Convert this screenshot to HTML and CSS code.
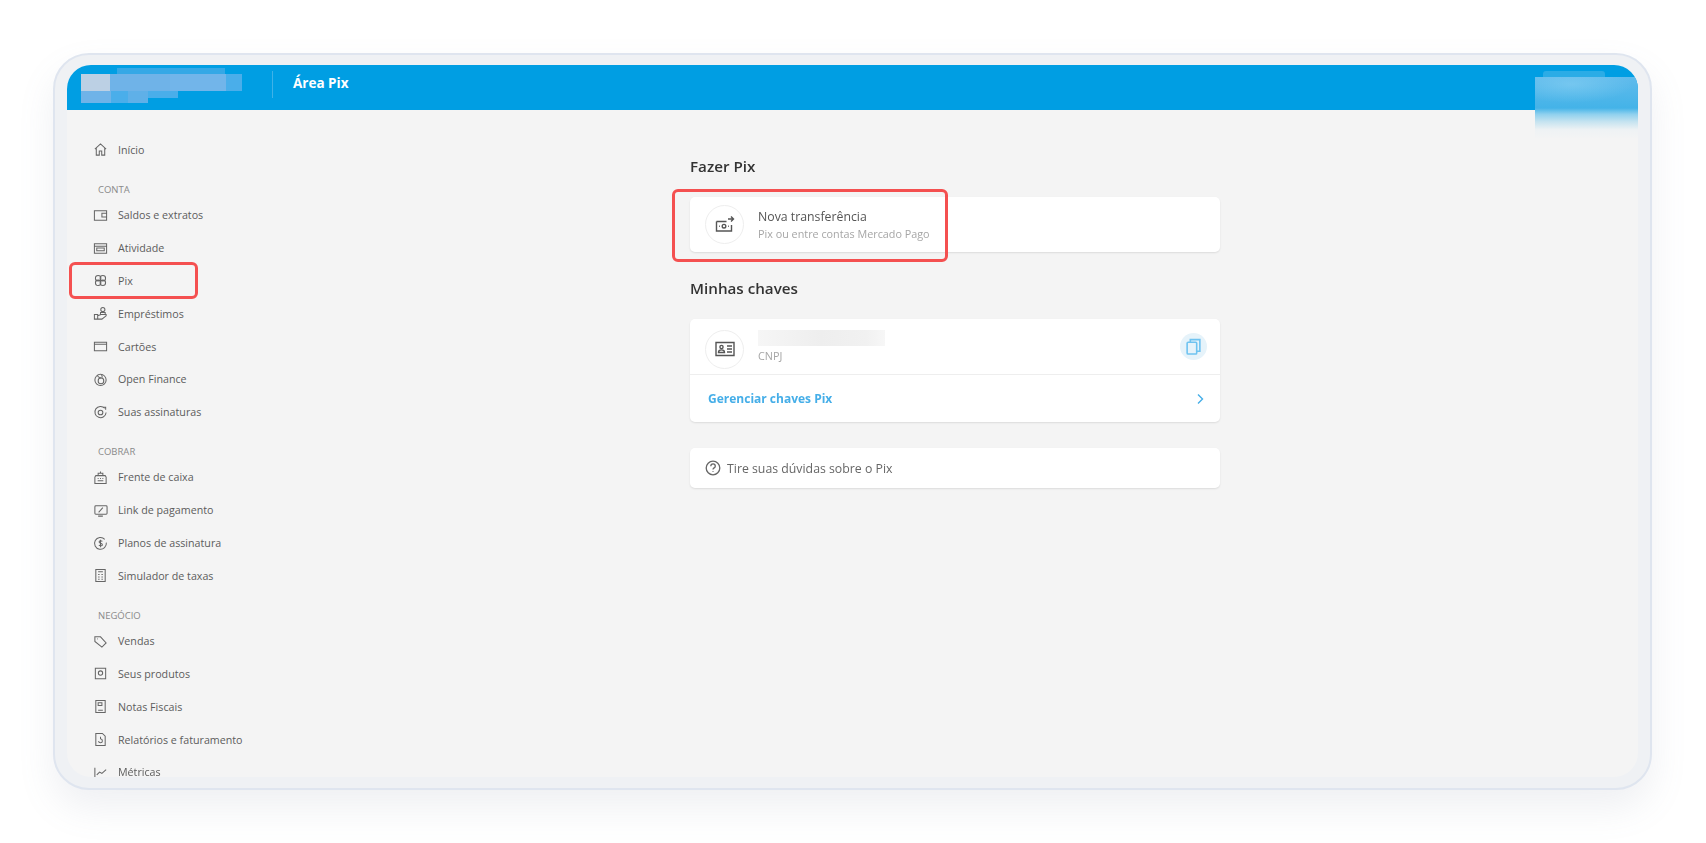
FILE: index.html
```html
<!DOCTYPE html>
<html lang="pt-BR">
<head>
<meta charset="utf-8">
<title>Área Pix</title>
<link rel="stylesheet" href="styles.css">
</head>
<body>
<div class="frame">
  <div class="shell">
    <header class="topbar">
      <svg class="logo-mosaic" width="162" height="36" viewBox="0 0 162 36">
        <rect x="1" y="7" width="29" height="17" fill="#bcd0e4"/>
        <rect x="30" y="7" width="60" height="17" fill="#6fb3e8"/>
        <rect x="37" y="1" width="108" height="6" fill="#35a8e6"/>
        <rect x="90" y="7" width="56" height="17" fill="#72b5ea"/>
        <rect x="146" y="7" width="16" height="17" fill="#4aaeea"/>
        <rect x="1" y="24" width="30" height="12" fill="#6fb3e8"/>
        <rect x="31" y="24" width="17" height="12" fill="#4aaeea"/>
        <rect x="48" y="24" width="20" height="12" fill="#5fb0e8"/>
        <rect x="68" y="24" width="30" height="7" fill="#4aaeea"/>
      </svg>
      <span class="topbar-divider"></span>
      <h1 class="topbar-title">Área Pix</h1>
      <div class="user-blur"></div>
    </header>
    <div class="content">
      <nav class="sidebar">
        <a class="nav-item nav-first">
          <svg class="nav-icon" viewBox="0 0 16 16"><path d="M2 7.500 8 2l6 5.500M3.500 6.500V14h3.200V9.500h2.600V14h3.200V6.500"/></svg>
          <span>Início</span>
        </a>
        <div class="nav-group">CONTA</div>
        <a class="nav-item">
          <svg class="nav-icon" viewBox="0 0 16 16"><path d="M1.500 3h13v10h-13zM9.500 5.500h5v4h-5z"/></svg>
          <span>Saldos e extratos</span>
        </a>
        <a class="nav-item">
          <svg class="nav-icon" viewBox="0 0 16 16"><path d="M1.500 3h13v10h-13zM1.500 5.500h13M4 7.500h8v2.800H4z"/></svg>
          <span>Atividade</span>
        </a>
        <a class="nav-item">
          <svg class="nav-icon" viewBox="0 0 16 16"><circle cx="5.500" cy="5.500" r="2.900"/><circle cx="10.500" cy="5.500" r="2.900"/><circle cx="5.500" cy="10.500" r="2.900"/><circle cx="10.500" cy="10.500" r="2.900"/></svg>
          <span>Pix</span>
        </a>
        <a class="nav-item">
          <svg class="nav-icon" viewBox="0 0 16 16"><circle cx="10.500" cy="3.800" r="2.200"/><path d="M1.500 9h3.500v5H1.500zM5 10.500 8.500 9H14v1.500L9.500 14H5M8 9V7h5v2"/></svg>
          <span>Empréstimos</span>
        </a>
        <a class="nav-item">
          <svg class="nav-icon" viewBox="0 0 16 16"><path d="M1.500 3.500h13v9h-13zM1.500 5.500h13"/></svg>
          <span>Cartões</span>
        </a>
        <a class="nav-item">
          <svg class="nav-icon" viewBox="0 0 16 16"><circle cx="8" cy="8.500" r="6"/><circle cx="8.500" cy="9.500" r="3"/><path d="M5 3c-.5 2 2 3 3.500 3.500M9 2.500c1 1.500 1 3 .5 4"/></svg>
          <span>Open Finance</span>
        </a>
        <a class="nav-item">
          <svg class="nav-icon" viewBox="0 0 16 16"><path d="M12.500 3.500A6 6 0 1 0 14 8"/><circle cx="8" cy="8" r="2.500"/><path d="M11 2.500h2.500V5"/></svg>
          <span>Suas assinaturas</span>
        </a>
        <div class="nav-group nav-group-spaced">COBRAR</div>
        <a class="nav-item">
          <svg class="nav-icon" viewBox="0 0 16 16"><path d="M2 14.500V7.500l1-1.500h10l1 1.500v7zM5.500 6V3.500h5V6M8 3.500V1.500M5 9h1M7.500 9h1M10 9h1M5 11.500h6"/></svg>
          <span>Frente de caixa</span>
        </a>
        <a class="nav-item">
          <svg class="nav-icon" viewBox="0 0 16 16"><path d="M3 3h11a1 1 0 0 1 1 1v7a1 1 0 0 1-1 1H3a1 1 0 0 1-1-1V4a1 1 0 0 1 1-1zM6 10l4.500-5M5.500 14h5"/></svg>
          <span>Link de pagamento</span>
        </a>
        <a class="nav-item">
          <svg class="nav-icon" viewBox="0 0 16 16"><path d="M12.500 3.500a6.300 6.300 0 1 0 1.700 3.500M10 5.800c-1-1-3.500-1-3.500.6 0 1.800 3.500 1 3.500 2.800 0 1.500-2.500 1.500-3.800.6M8 4v8"/></svg>
          <span>Planos de assinatura</span>
        </a>
        <a class="nav-item">
          <svg class="nav-icon" viewBox="0 0 16 16"><path d="M3 1.500h10v13H3zM5.500 4h5M5.500 7h1.500M9 7h1.500M5.500 9.500h1.500M9 9.500h1.500M5.500 12h1.500M9 12h1.500"/></svg>
          <span>Simulador de taxas</span>
        </a>
        <div class="nav-group nav-group-spaced">NEGÓCIO</div>
        <a class="nav-item">
          <svg class="nav-icon" viewBox="0 0 16 16"><path d="M2 3h6l6 6.500-4.500 4.500L2 8zM4.500 5.200h.6"/></svg>
          <span>Vendas</span>
        </a>
        <a class="nav-item">
          <svg class="nav-icon" viewBox="0 0 16 16"><path d="M2.500 2.500h11v11h-11z"/><circle cx="8" cy="7.500" r="2.300"/></svg>
          <span>Seus produtos</span>
        </a>
        <a class="nav-item">
          <svg class="nav-icon" viewBox="0 0 16 16"><path d="M3 1.500h10v13H3zM5.500 4h4v3h-4zM5.500 12h5"/></svg>
          <span>Notas Fiscais</span>
        </a>
        <a class="nav-item">
          <svg class="nav-icon" viewBox="0 0 16 16"><path d="M3 1.500h7l3 3v10H3zM6 9.500a2 2 0 1 0 2-2M8 5v2.500"/></svg>
          <span>Relatórios e faturamento</span>
        </a>
        <a class="nav-item">
          <svg class="nav-icon" viewBox="0 0 16 16"><path d="M2 3v10.500h12.500M4 10.500l3-3 2.500 1.500L14 5"/></svg>
          <span>Métricas</span>
        </a>
      </nav>
      <main class="main">
        <h2 class="section-title">Fazer Pix</h2>
        <section class="card card-row card-transfer">
          <span class="round-icon">
            <svg class="round-svg" viewBox="0 0 20 20"><path d="M1.500 6.500h10M1.500 6.500v9.500h15v-6"/><circle cx="9" cy="11.200" r="1.800"/><path d="M4 11.200h.8M13 11.200h.8M13 4h5.500M16 1.500 18.500 4 16 6.500"/></svg>
          </span>
          <div class="card-text">
            <div class="card-title">Nova transferência</div>
            <div class="card-sub">Pix ou entre contas Mercado Pago</div>
          </div>
        </section>
        <h2 class="section-title section-title-keys">Minhas chaves</h2>
        <section class="card">
          <div class="card-row card-key">
            <span class="round-icon">
              <svg class="round-svg" viewBox="0 0 20 20"><path d="M1 3.500h18v13H1z"/><circle cx="6.500" cy="8" r="1.600"/><path d="M3.500 13.500c0-3.500 6-3.500 6 0zM12 7h5M12 10h5M12 13h5"/></svg>
            </span>
            <div class="card-text">
              <div class="key-blur"></div>
              <div class="card-sub key-sub">CNPJ</div>
            </div>
            <span class="copy-btn">
              <svg class="copy-svg" viewBox="0 0 16 16"><rect x="2" y="4" width="9" height="11" rx="1"/><path d="M5 4V1.500h9v11h-3"/></svg>
            </span>
          </div>
          <a class="card-link">
            <span>Gerenciar chaves Pix</span>
            <svg class="chevron" viewBox="0 0 8 12"><path d="M2 1.500 6.500 6 2 10.500"/></svg>
          </a>
        </section>
        <section class="card help-card">
          <svg class="help-icon" viewBox="0 0 16 16"><circle cx="8" cy="8" r="6.800"/><path d="M5.800 6.200c0-3 4.500-3 4.500 0 0 1.800-2.300 1.600-2.300 3.300M8 11.200v.8"/></svg>
          <span>Tire suas dúvidas sobre o Pix</span>
        </section>
      </main>
    </div>
    <div class="mark mark-pix"></div>
    <div class="mark mark-transfer"></div>
  </div>
</div>
</body>
</html>
```

FILE: styles.css
```css
* { box-sizing: border-box; }
html, body { margin: 0; height: 100%; background: #fff; overflow: hidden; }
body {
  padding: 53px 54px 0 53px;
  font-family: "Open Sans", "Liberation Sans", sans-serif;
  color: #555;
}
.frame {
  height: 737px;
  padding: 10px 12px 11px 12px;
  background: #eff1f4;
  border: 2px solid #dfe5ef;
  border-radius: 36px;
  box-shadow: 0 18px 36px rgba(120, 135, 160, .12);
}
.shell {
  position: relative;
  height: 100%;
  display: flex;
  flex-direction: column;
  background: #f4f4f4;
  border-radius: 24px;
  overflow: hidden;
  filter: blur(.35px);
}
.topbar {
  flex: none;
  height: 45px;
  padding-bottom: 7px;
  display: flex;
  align-items: center;
  background: #009ee3;
  color: #fff;
  position: relative;
}
.logo-mosaic { flex: none; margin: 2px 0 0 13px; filter: blur(.6px); }
.topbar-divider { flex: none; width: 1px; height: 27px; margin-left: 30px; background: #3fb2e8; }
.topbar-title { margin: 0 0 0 20px; font-size: 13.500px; font-weight: 700; line-height: 1; }
.user-blur {
  position: absolute;
  right: 0;
  top: 12px;
  width: 103px;
  height: 62px;
  background:
    radial-gradient(ellipse 60% 30% at 35% 12%, rgba(150, 215, 245, .45), rgba(150, 215, 245, 0)),
    linear-gradient(to bottom, #60bbec 0%, #44b3e8 50%, #8fd0ee 60%, #c5e3f0 72%, #eef2f4 85%, #f4f4f4 100%);
}
.user-blur::before {
  content: "";
  position: absolute;
  left: 8px;
  top: -6px;
  width: 62px;
  height: 6px;
  border-radius: 3px 3px 0 0;
  background: #2bace6;
}
.content { flex: 1; min-height: 0; display: flex; }
.sidebar { flex: none; width: 205px; padding-top: 23.600px; overflow: hidden; }
.nav-item {
  display: flex;
  align-items: center;
  height: 32.800px;
  padding-left: 26px;
  font-size: 10.700px;
  color: #5c5c5c;
  white-space: nowrap;
}
.nav-first { margin-bottom: 14.600px; }
.nav-icon {
  flex: none;
  width: 15px;
  height: 15px;
  margin-right: 10px;
  fill: none;
  stroke: #666;
  stroke-width: 1.100;
}
.nav-group {
  height: 18px;
  line-height: 18px;
  padding-left: 31px;
  font-size: 9.500px;
  color: #8a8a8a;
}
.nav-group-spaced { margin-top: 14.500px; }
.main { flex: 1; min-width: 0; display: flex; flex-direction: column; align-items: center; padding-top: 47px; }
.main > * { width: 530px; flex: none; }
.section-title { margin: 0; height: 20px; line-height: 18px; font-size: 15.200px; font-weight: 600; color: #333; }
.section-title-keys { margin-top: 27px; }
.card {
  margin-top: 20px;
  background: #fff;
  border-radius: 5px;
  box-shadow: 0 1px 2px rgba(0, 0, 0, .1);
}
.card-row { display: flex; align-items: center; }
.card-transfer { height: 55px; padding-left: 15px; }
.card-key { height: 56px; padding: 0 13px 0 15px; border-bottom: 1px solid #eee; }
.card-key .round-icon { margin-top: 5px; }
.round-icon {
  flex: none;
  width: 39px;
  height: 39px;
  display: flex;
  align-items: center;
  justify-content: center;
  border: 1px solid #eee;
  border-radius: 50%;
}
.round-svg { width: 20px; height: 20px; fill: none; stroke: #555; stroke-width: 1.400; }
.card-text { flex: 1; margin-left: 14px; }
.card-title { font-size: 12.300px; line-height: 18px; color: #555; }
.card-sub { font-size: 10.800px; line-height: 15px; color: #a6a6a6; }
.key-sub { margin-top: 2px; }
.key-blur { width: 127px; height: 16px; background: linear-gradient(90deg, #f6f6f6, #eeeeee 50%, #f1f1f1 85%, #f7f7f7); }
.copy-btn {
  flex: none;
  width: 27px;
  height: 27px;
  display: flex;
  align-items: center;
  justify-content: center;
  border-radius: 50%;
  background: #e6f3fa;
}
.copy-svg { width: 17px; height: 17px; fill: none; stroke: #6fc3f0; stroke-width: 1.500; }
.card-link {
  height: 47px;
  display: flex;
  align-items: center;
  justify-content: space-between;
  padding: 0 16px 0 18px;
  font-size: 12px;
  font-weight: 700;
  color: #45aee8;
}
.chevron { width: 8px; height: 12px; fill: none; stroke: #45aee8; stroke-width: 1.400; }
.help-card {
  margin-top: 26px;
  height: 40px;
  display: flex;
  align-items: center;
  padding-left: 15px;
  font-size: 12.300px;
  color: #666;
}
.help-icon { width: 16px; height: 16px; margin-right: 6px; fill: none; stroke: #666; stroke-width: 1.300; }
.mark { position: absolute; border: 3px solid #f45050; border-radius: 6px; pointer-events: none; }
.mark-pix { left: 2px; top: 197px; width: 129px; height: 37px; }
.mark-transfer { left: 605px; top: 124px; width: 276px; height: 73px; }
```
